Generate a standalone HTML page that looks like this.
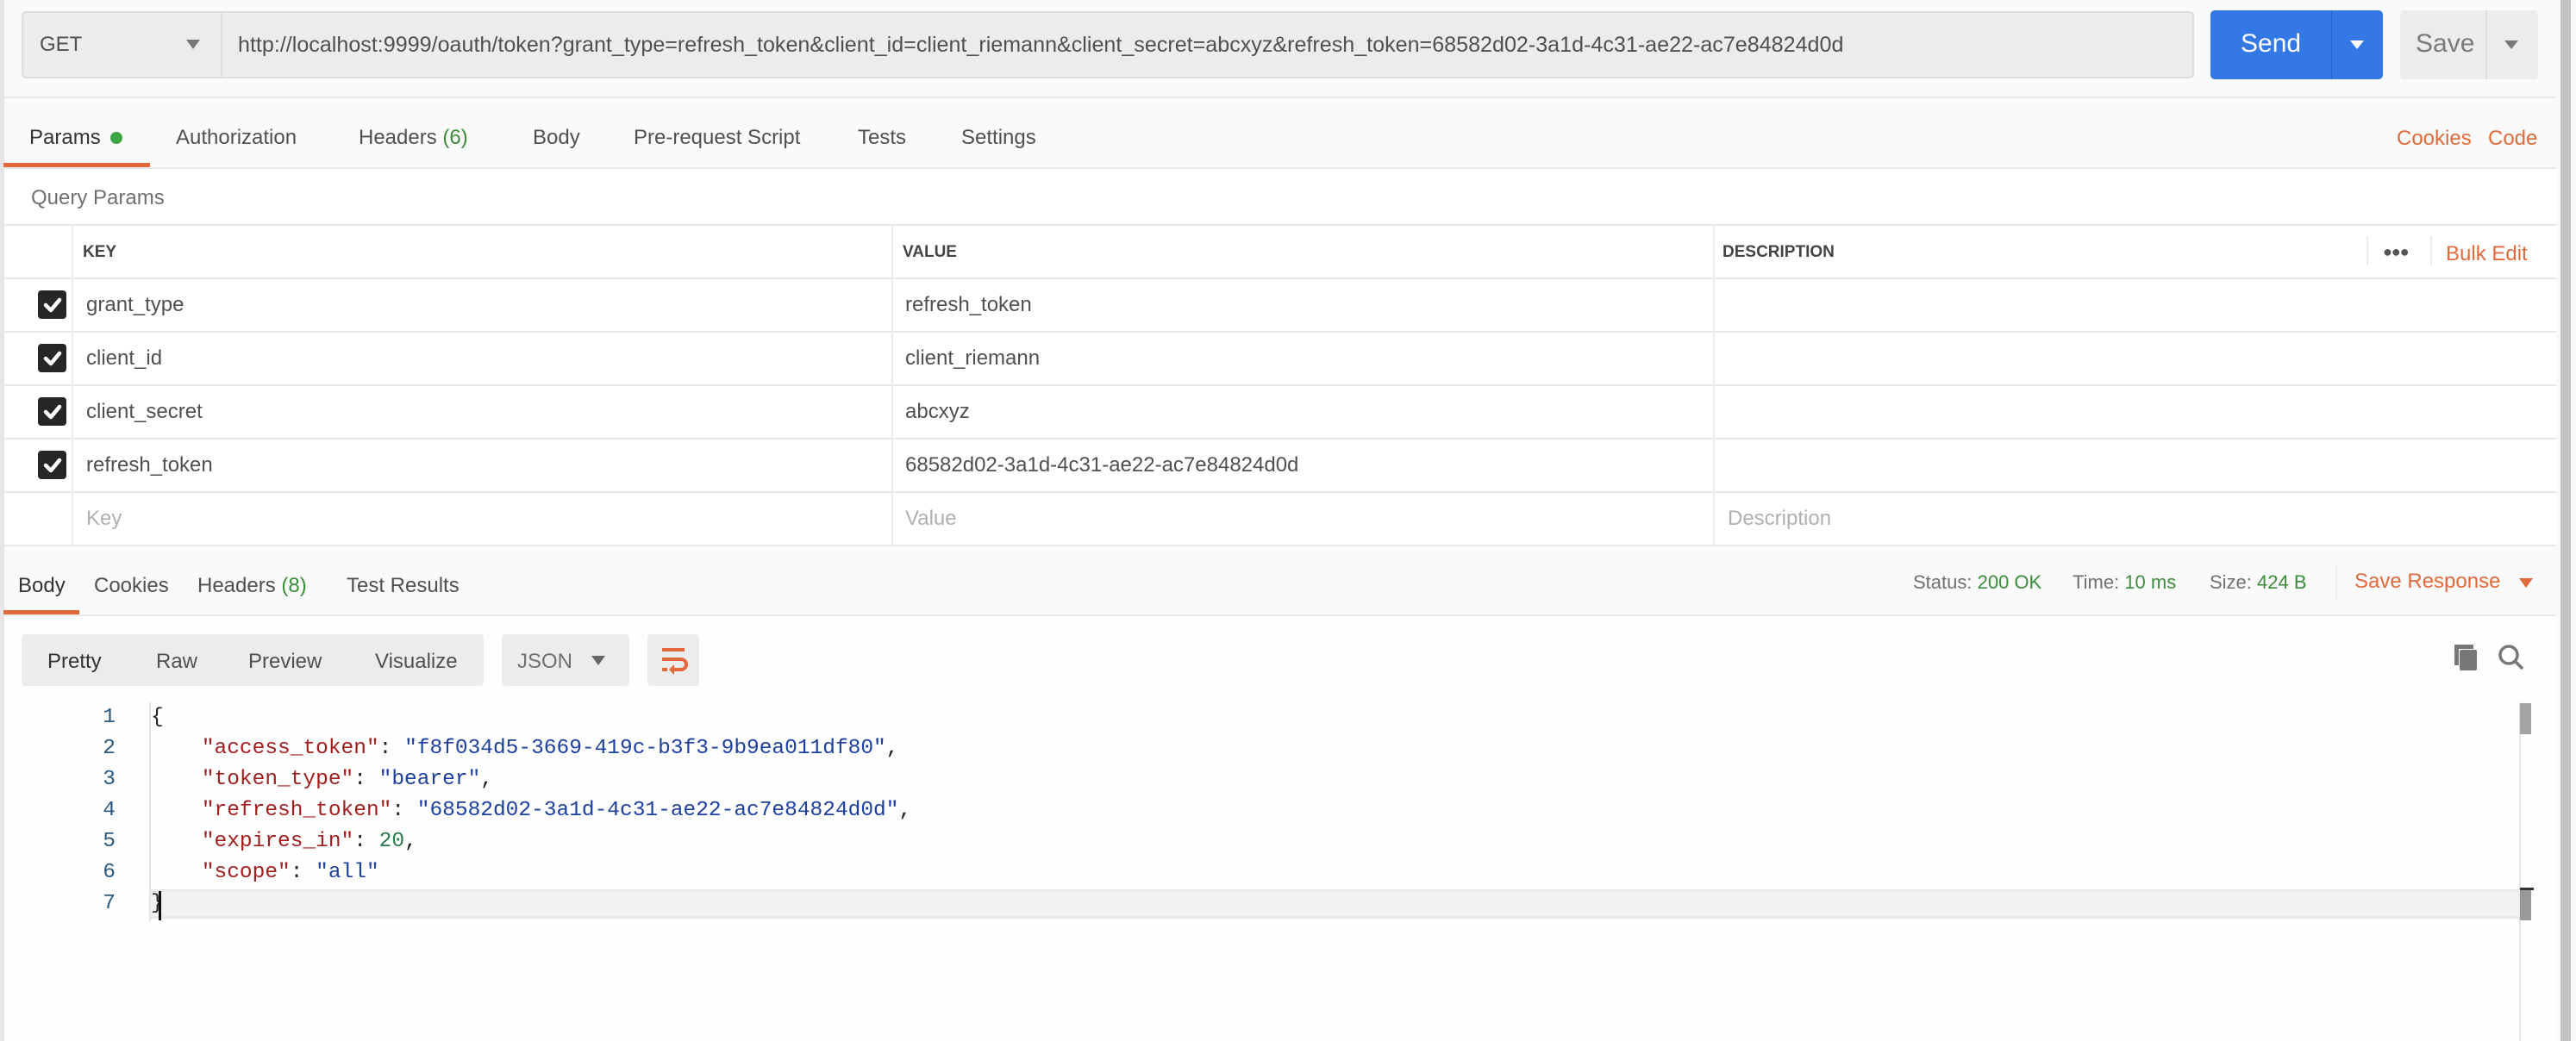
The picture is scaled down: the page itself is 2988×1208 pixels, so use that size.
<!DOCTYPE html>
<html><head><meta charset="utf-8"><style>
*{margin:0;padding:0;box-sizing:border-box}
body{width:2988px;height:1208px;background:#fafafa;font-family:"Liberation Sans",sans-serif;position:relative;overflow:hidden;color:#505050}
.a{position:absolute;white-space:nowrap}
.t{font-size:24px;line-height:30px}
.o{color:#e06a3a}
.g{color:#3b8d3b}
.hl{position:absolute;height:2px;background:#e8e8e8}
.vl{position:absolute;width:2px;background:#ececec}
.cb{position:absolute;left:44px;width:33px;height:33px;background:#262626;border-radius:4px}
.mono{font-family:"Liberation Mono",monospace;font-size:24.5px;line-height:36px;white-space:pre}
.k{color:#a11e1e}.s{color:#1d3f9e}.n{color:#2a7a4a}
</style></head><body>
<div class="a" style="left:0;top:0;width:5px;height:1208px;background:#e6e6e6"></div>
<div class="a" style="left:2970px;top:0;width:12px;height:1208px;background:#c4c4c4"></div>
<!-- URL row -->
<div class="a" style="left:25px;top:13px;width:2520px;height:78px;background:#ececec;border:2px solid #dedede;border-radius:5px"></div>
<div class="a" style="left:256px;top:13px;width:2px;height:78px;background:#dcdcdc"></div>
<div class="a t" style="left:46px;top:37px;color:#505050">GET</div>
<div class="a" style="left:216px;top:46px;border-left:8px solid transparent;border-right:8px solid transparent;border-top:11px solid #777"></div>
<div class="a" style="left:276px;top:37px;font-size:25.1px;line-height:30px;color:#505050">http://localhost:9999/oauth/token?grant_type=refresh_token&amp;client_id=client_riemann&amp;client_secret=abcxyz&amp;refresh_token=68582d02-3a1d-4c31-ae22-ac7e84824d0d</div>
<div class="a" style="left:2564px;top:12px;width:200px;height:80px;background:#3478e5;border-radius:5px"></div>
<div class="a" style="left:2704px;top:12px;width:1px;height:80px;background:#2a66c8"></div>
<div class="a" style="left:2599px;top:34px;font-size:30px;color:#fff">Send</div>
<div class="a" style="left:2726px;top:47px;border-left:8px solid transparent;border-right:8px solid transparent;border-top:10px solid #fff"></div>
<div class="a" style="left:2784px;top:12px;width:160px;height:80px;background:#ececec;border-radius:5px"></div>
<div class="a" style="left:2883px;top:12px;width:2px;height:80px;background:#dcdcdc"></div>
<div class="a" style="left:2802px;top:34px;font-size:30px;color:#7a7a7a">Save</div>
<div class="a" style="left:2905px;top:47px;border-left:8px solid transparent;border-right:8px solid transparent;border-top:10px solid #777"></div>
<div class="hl" style="left:5px;top:112px;width:2960px"></div>
<!-- tabs -->
<div class="a t" style="left:34px;top:145px;color:#333">Params</div>
<div class="a" style="left:128px;top:153px;width:14px;height:14px;border-radius:7px;background:#3da543"></div>
<div class="a t" style="left:204px;top:145px">Authorization</div>
<div class="a t" style="left:416px;top:145px">Headers <span class="g">(6)</span></div>
<div class="a t" style="left:618px;top:145px">Body</div>
<div class="a t" style="left:735px;top:145px">Pre-request Script</div>
<div class="a t" style="left:995px;top:145px">Tests</div>
<div class="a t" style="left:1115px;top:145px">Settings</div>
<div class="a t o" style="left:2780px;top:146px">Cookies</div>
<div class="a t o" style="left:2886px;top:146px">Code</div>
<div class="hl" style="left:5px;top:194px;width:2960px"></div>
<div class="a" style="left:4px;top:189px;width:170px;height:5px;background:#e2673a"></div>
<!-- params -->
<div class="a" style="left:5px;top:196px;width:2960px;height:437px;background:#fff"></div>
<div class="a t" style="left:36px;top:215px;color:#707070">Query Params</div>
<div class="hl" style="left:5px;top:260px;width:2960px"></div>
<div class="hl" style="left:5px;top:322px;width:2960px"></div>
<div class="hl" style="left:5px;top:384px;width:2960px"></div>
<div class="hl" style="left:5px;top:446px;width:2960px"></div>
<div class="hl" style="left:5px;top:508px;width:2960px"></div>
<div class="hl" style="left:5px;top:570px;width:2960px"></div>
<div class="hl" style="left:5px;top:632px;width:2960px"></div>
<div class="vl" style="left:83px;top:260px;height:374px"></div>
<div class="vl" style="left:1034px;top:260px;height:374px"></div>
<div class="vl" style="left:1987px;top:260px;height:374px"></div>
<div class="vl" style="left:2745px;top:274px;height:34px"></div>
<div class="vl" style="left:2819px;top:274px;height:34px"></div>
<div class="a" style="left:96px;top:282px;font-size:19px;font-weight:bold;color:#444">KEY</div>
<div class="a" style="left:1047px;top:282px;font-size:19px;font-weight:bold;color:#444">VALUE</div>
<div class="a" style="left:1998px;top:282px;font-size:19px;font-weight:bold;color:#444">DESCRIPTION</div>
<div class="a" style="left:2764px;top:282px;font-size:18px;font-weight:bold;color:#555;letter-spacing:-1px">●●●</div>
<div class="a t o" style="left:2837px;top:280px">Bulk Edit</div>
<div class="cb" style="top:337px"></div><div class="cb" style="top:399px"></div><div class="cb" style="top:461px"></div><div class="cb" style="top:523px"></div>
<svg class="a" style="left:44px;top:337px" width="33" height="220" viewBox="0 0 33 220"><g fill="none" stroke="#fff" stroke-width="4.5" stroke-linecap="round" stroke-linejoin="round"><path d="M9 17l6 6 10-12"/><path d="M9 79l6 6 10-12"/><path d="M9 141l6 6 10-12"/><path d="M9 203l6 6 10-12"/></g></svg>
<div class="a t" style="left:100px;top:339px">grant_type</div>
<div class="a t" style="left:100px;top:401px">client_id</div>
<div class="a t" style="left:100px;top:463px">client_secret</div>
<div class="a t" style="left:100px;top:525px">refresh_token</div>
<div class="a t" style="left:100px;top:587px;color:#b0b0b0">Key</div>
<div class="a t" style="left:1050px;top:339px">refresh_token</div>
<div class="a t" style="left:1050px;top:401px">client_riemann</div>
<div class="a t" style="left:1050px;top:463px">abcxyz</div>
<div class="a t" style="left:1050px;top:525px">68582d02-3a1d-4c31-ae22-ac7e84824d0d</div>
<div class="a t" style="left:1050px;top:587px;color:#b0b0b0">Value</div>
<div class="a t" style="left:2004px;top:587px;color:#b0b0b0">Description</div>
<!-- response tabs -->
<div class="a t" style="left:21px;top:665px;color:#333">Body</div>
<div class="a t" style="left:109px;top:665px">Cookies</div>
<div class="a t" style="left:229px;top:665px">Headers <span class="g">(8)</span></div>
<div class="a t" style="left:402px;top:665px">Test Results</div>
<div class="a" style="left:2219px;top:661px;font-size:22px;line-height:30px;color:#707070">Status: <span class="g">200 OK</span></div>
<div class="a" style="left:2404px;top:661px;font-size:22px;line-height:30px;color:#707070">Time: <span class="g">10 ms</span></div>
<div class="a" style="left:2563px;top:661px;font-size:22px;line-height:30px;color:#707070">Size: <span class="g">424 B</span></div>
<div class="vl" style="left:2709px;top:655px;height:40px"></div>
<div class="a t o" style="left:2731px;top:660px">Save Response</div>
<div class="a" style="left:2922px;top:671px;border-left:8px solid transparent;border-right:8px solid transparent;border-top:11px solid #e06a3a"></div>
<div class="a" style="left:5px;top:715px;width:2960px;height:493px;background:#fefefe"></div>
<div class="hl" style="left:5px;top:713px;width:2960px"></div>
<div class="a" style="left:4px;top:708px;width:88px;height:5px;background:#e2673a"></div>
<!-- toolbar -->
<div class="a" style="left:25px;top:736px;width:536px;height:60px;background:#ececec;border-radius:4px"></div>
<div class="a t" style="left:55px;top:753px;color:#333">Pretty</div>
<div class="a t" style="left:181px;top:753px">Raw</div>
<div class="a t" style="left:288px;top:753px">Preview</div>
<div class="a t" style="left:435px;top:753px">Visualize</div>
<div class="a" style="left:582px;top:736px;width:148px;height:60px;background:#ececec;border-radius:4px"></div>
<div class="a t" style="left:600px;top:753px;color:#707070">JSON</div>
<div class="a" style="left:686px;top:761px;border-left:8px solid transparent;border-right:8px solid transparent;border-top:11px solid #666"></div>
<div class="a" style="left:751px;top:736px;width:60px;height:60px;background:#ececec;border-radius:4px"></div>
<svg class="a" style="left:764px;top:748px" width="36" height="36" viewBox="0 0 36 36"><g fill="none" stroke="#e2673a" stroke-width="4"><path d="M4 6h26"/><path d="M4 17h22a6 6 0 0 1 0 12h-10"/><path d="M4 29h6"/></g><path d="M18 23l-6 6 6 6z" fill="#e2673a"/></svg>
<svg class="a" style="left:2845px;top:746px" width="32" height="32" viewBox="0 0 32 32"><rect x="2" y="2" width="5" height="24" fill="#777"/><rect x="2" y="2" width="22" height="5" fill="#777"/><rect x="8" y="8" width="20" height="24" rx="2" fill="#777"/></svg>
<svg class="a" style="left:2896px;top:746px" width="34" height="34" viewBox="0 0 34 34"><circle cx="14" cy="14" r="10" fill="none" stroke="#777" stroke-width="3.5"/><path d="M21 21l9 9" stroke="#777" stroke-width="3.5"/></svg>
<!-- code -->
<div class="a" style="left:175px;top:1032px;width:2748px;height:34px;background:#f2f2f2;border-top:3px solid #e8e8e8;border-bottom:3px solid #e8e8e8"></div>
<div class="vl" style="left:173px;top:815px;height:255px;background:#e4e4e4"></div>
<div class="a" style="left:2922px;top:815px;width:2px;height:393px;background:#e6e6e6"></div>
<div class="a" style="left:2923px;top:816px;width:13px;height:36px;background:#a4a4a4"></div>
<div class="a" style="left:2923px;top:1031px;width:13px;height:37px;background:#999"></div>
<div class="a" style="left:2923px;top:1030px;width:16px;height:3px;background:#333"></div>
<div class="a mono" style="left:112px;top:815px;color:#2a5a80;text-align:right;width:22px">1
2
3
4
5
6
7</div>
<div class="a mono" style="left:175px;top:815px;color:#222">{
    <span class="k">"access_token"</span>: <span class="s">"f8f034d5-3669-419c-b3f3-9b9ea011df80"</span>,
    <span class="k">"token_type"</span>: <span class="s">"bearer"</span>,
    <span class="k">"refresh_token"</span>: <span class="s">"68582d02-3a1d-4c31-ae22-ac7e84824d0d"</span>,
    <span class="k">"expires_in"</span>: <span class="n">20</span>,
    <span class="k">"scope"</span>: <span class="s">"all"</span>
}</div>
<div class="a" style="left:184px;top:1034px;width:3px;height:34px;background:#111"></div>
</body></html>
